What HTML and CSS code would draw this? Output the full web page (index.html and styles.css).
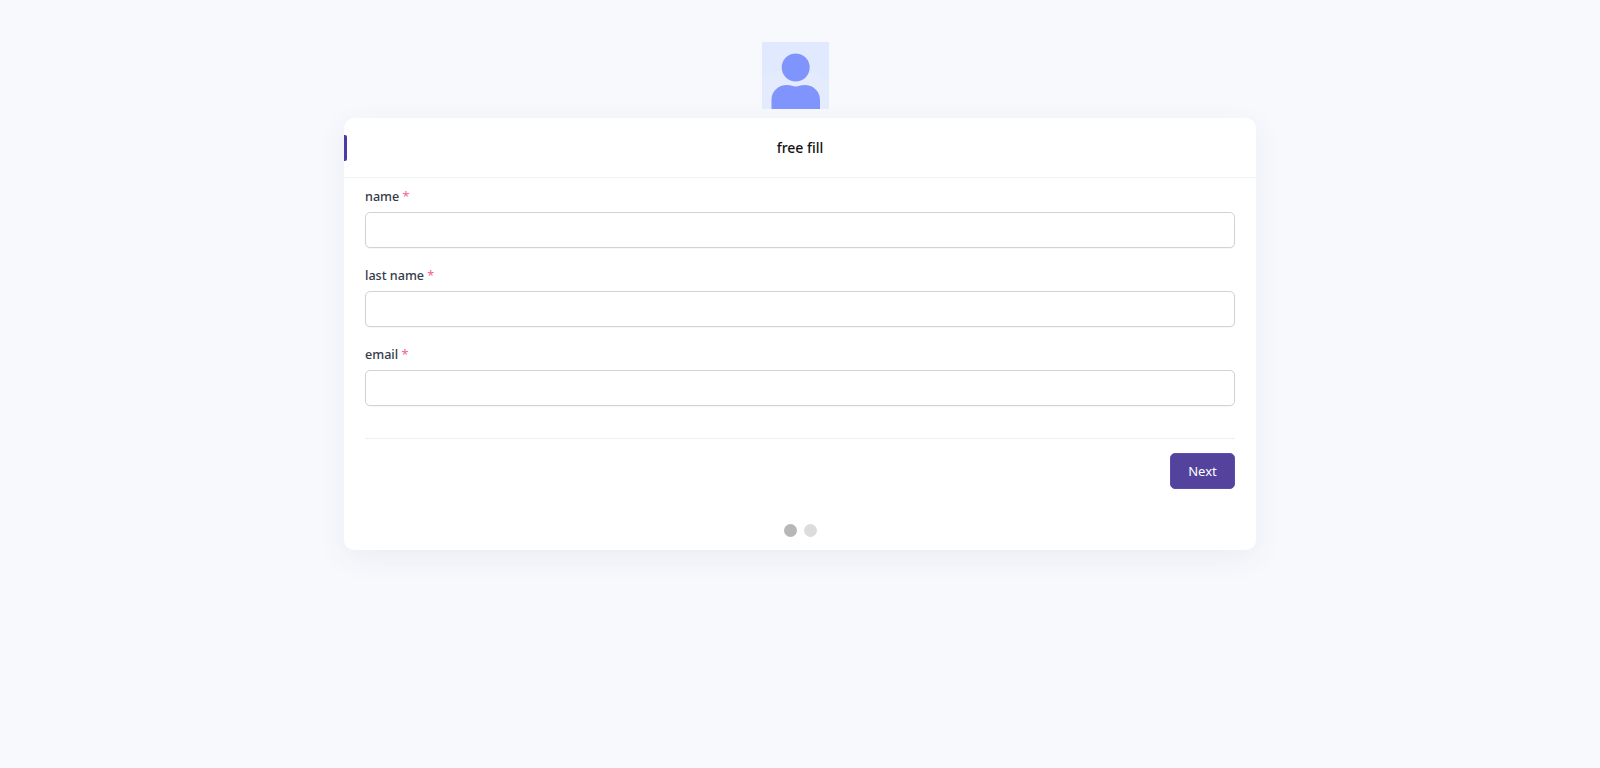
FILE: index.html
```html
<!DOCTYPE html>
<html lang="en">
<head>
    <meta charset="UTF-8">
    <meta name="viewport" content="width=device-width, initial-scale=1.0">
    <title>free fill</title>
    <link rel="stylesheet" href="styles.css">
</head>
<body>
    <div class="page">
        <!-- Avatar -->
        <div class="avatar-row">
            <svg class="avatar" viewBox="0 0 67 67" width="67" height="67">
                <rect width="67" height="67" fill="#e0e9fe"/>
                <path d="M0 36 C12 28 26 26 38 28 C50 30 60 34 67 40 V67 H0 Z" fill="#e3ebfc"/>
                <circle cx="33.7" cy="25.5" r="14.5" fill="#e9efff"/>
                <circle cx="33.7" cy="25.5" r="14" fill="#8094fe"/>
                <path d="M9.5 67 V58 C9.5 49 16.5 43 25 43 C29 43 31 44.5 33.7 44.5 C36.4 44.5 38.5 43 42.5 43 C51 43 58 49 58 58 V67 Z" fill="#8094fe"/>
            </svg>
        </div>

        <!-- Form Card -->
        <div class="card">
            <div class="card-header">
                <span class="header-mark"></span>
                <h3>free fill</h3>
            </div>
            <form class="card-body">
                <div class="field">
                    <label>name <span class="req">*</span></label>
                    <input type="text">
                </div>
                <div class="field">
                    <label>last name <span class="req">*</span></label>
                    <input type="text">
                </div>
                <div class="field">
                    <label>email <span class="req">*</span></label>
                    <input type="text">
                </div>
                <div class="form-actions">
                    <button type="button">Next</button>
                </div>
            </form>
            <div class="steps">
                <span class="dot active"></span>
                <span class="dot"></span>
            </div>
        </div>
    </div>
</body>
</html>
```

FILE: styles.css
```css
/* General Styles */
html, body {
    height: 100%;
}

body {
    font-family: "Noto Sans", "Open Sans", sans-serif;
    margin: 0;
    padding: 0;
    background-color: #f8f9fd;
    color: #2f3345;
}

.page {
    width: 912px;
    margin: 0 auto;
    padding-top: 42px;
}

/* Avatar */
.avatar-row {
    display: flex;
    justify-content: center;
    padding-right: 9px;
    margin-bottom: 9px;
}

.avatar {
    display: block;
}

/* Card */
.card {
    background: white;
    border-radius: 10px;
    box-shadow: 0 8px 30px rgba(62, 68, 120, 0.07);
    height: 432px;
    box-sizing: border-box;
}

.card-header {
    position: relative;
    height: 60px;
    display: flex;
    align-items: center;
    justify-content: center;
    border-bottom: 1px solid #f2f3f6;
    box-sizing: border-box;
}

.card-header h3 {
    margin: 0;
    font-size: 14px;
    font-weight: 500;
    color: #111;
}

.header-mark {
    position: absolute;
    left: 0;
    top: 17px;
    width: 2.5px;
    height: 26px;
    background-color: #4f39a5;
    border-radius: 0 2px 2px 0;
}

.card-body {
    padding: 0 21px;
}

/* Fields */
.field {
    height: 79.2px;
}

.field label {
    display: block;
    font-size: 12.6px;
    font-weight: 500;
    line-height: 18px;
    padding-top: 10px;
    margin-bottom: 6px;
    color: #343a4a;
}

.req {
    color: #f6608f;
    font-weight: 400;
}

.field input {
    display: block;
    width: 100%;
    height: 36px;
    box-sizing: border-box;
    border: 1px solid #cfd3d8;
    border-radius: 5px;
    background: white;
    box-shadow: 0 1px 1px rgba(60, 70, 100, 0.05);
}

.form-actions {
    display: flex;
    justify-content: flex-end;
    margin-top: 22.6px;
    padding-top: 14px;
    border-top: 1px solid #eeeff2;
}

.form-actions button {
    width: 65px;
    height: 36px;
    border: 1px solid #5b4db0;
    border-radius: 5px;
    background-color: #54439c;
    color: white;
    font-family: inherit;
    font-size: 13px;
    cursor: pointer;
}

/* Step Dots */
.steps {
    display: flex;
    justify-content: center;
    gap: 7px;
    margin-top: 35px;
}

.dot {
    width: 13px;
    height: 13px;
    border-radius: 50%;
    background-color: #dcdcdc;
}

.dot.active {
    background-color: #b7b7b7;
}
```
